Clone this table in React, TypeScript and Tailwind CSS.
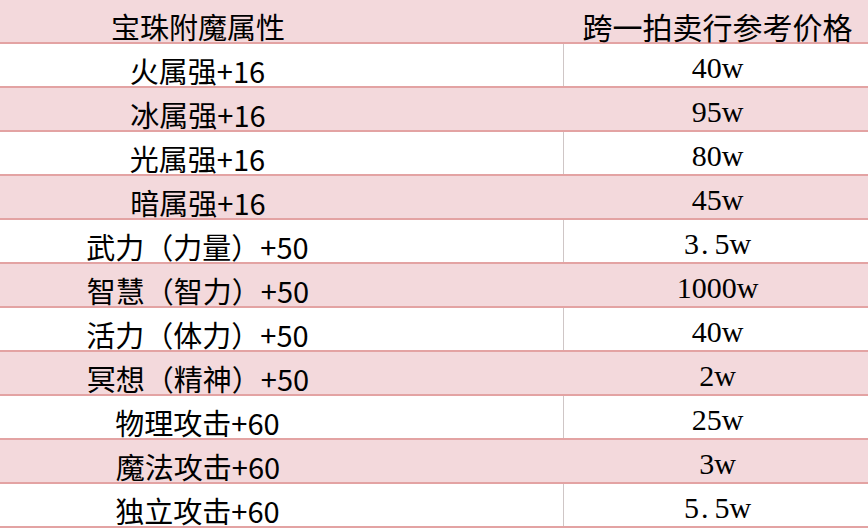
import React from "react";

const rows: [string, React.ReactNode][] = [
  ["火属强+16", "40w"],
  ["冰属强+16", "95w"],
  ["光属强+16", "80w"],
  ["暗属强+16", "45w"],
  ["武力（力量）+50", <>3<span className="pl-[2px] pr-[6px]">.</span>5w</>],
  ["智慧（智力）+50", "1000w"],
  ["活力（体力）+50", "40w"],
  ["冥想（精神）+50", "2w"],
  ["物理攻击+60", "25w"],
  ["魔法攻击+60", "3w"],
  ["独立攻击+60", <>5<span className="pl-[2px] pr-[6px]">.</span>5w</>],
];

const cjk = "font-['Noto_Sans_CJK_SC','Noto_Sans',sans-serif]";
const num = "font-['Liberation_Serif','Noto_Sans_CJK_SC',serif]";

export default function App() {
  return (
    <div className="w-[868px] h-[530px] bg-white overflow-hidden text-black">
      <div className="flex h-[44px] bg-[#f3d9dc] border-b-2 border-[#e3a3a3]">
        <div className={`w-[564px] pr-[168px] flex items-end justify-center pb-[1px] text-[29px] leading-none ${cjk}`}>
          宝珠附魔属性
        </div>
        <div className={`flex-1 pl-[3px] flex items-end justify-center pb-[1px] text-[30px] leading-none ${cjk}`}>
          跨一拍卖行参考价格
        </div>
      </div>
      {rows.map(([a, b], i) => {
        const pink = i % 2 === 1;
        return (
          <div
            key={i}
            className={`flex h-[44px] border-b-2 border-[#e3a3a3] ${pink ? "bg-[#f3d9dc]" : "bg-white"}`}
          >
            <div
              className={`w-[564px] pr-[168px] flex items-end justify-center pb-[1px] text-[29px] leading-none ${cjk} ${pink ? "" : "border-r border-[#cfc6c6]"}`}
            >
              {a}
            </div>
            <div className={`flex-1 pl-[3px] flex items-end justify-center pb-[3px] text-[30px] leading-none ${num}`}>
              {b}
            </div>
          </div>
        );
      })}
    </div>
  );
}
